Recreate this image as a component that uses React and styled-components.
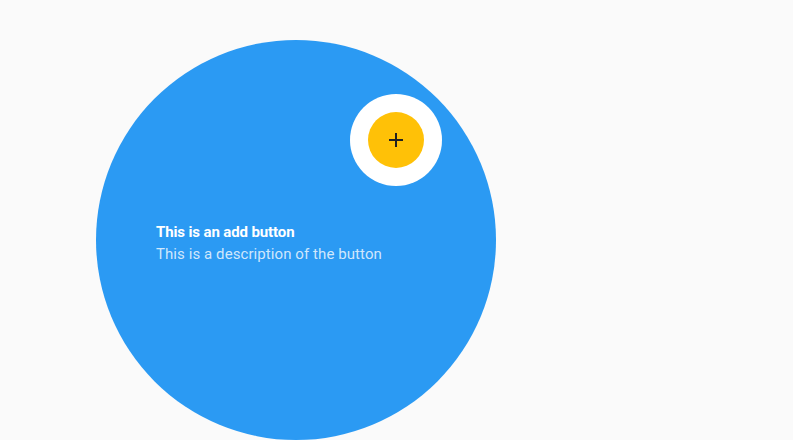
import React from 'react';
import styled, { createGlobalStyle } from 'styled-components';

const GlobalStyle = createGlobalStyle`
  html, body {
    margin: 0;
    padding: 0;
    background: #fafafa;
    font-family: Roboto, "Liberation Sans", sans-serif;
  }
`;

const Page = styled.div`
  position: relative;
  width: 793px;
  height: 440px;
  overflow: hidden;
  background: #fafafa;
`;

// feature discovery overlay
const Discovery = styled.div`
  position: absolute;
  left: 96px;
  top: 40px;
  width: 400px;
  height: 400px;
  border-radius: 50%;
  background: #2b9af3;
  box-sizing: border-box;
  padding: 182px 60px 0;
  display: flex;
  flex-direction: column;
`;

const Title = styled.div`
  font-size: 15px;
  font-weight: 700;
  letter-spacing: -0.12px;
  color: #ffffff;
  line-height: 20px;
`;

const Description = styled.div`
  font-size: 15px;
  font-weight: 400;
  letter-spacing: 0.08px;
  color: rgba(255, 255, 255, 0.78);
  line-height: 20px;
  margin-top: 2px;
`;

const TargetRing = styled.div`
  position: absolute;
  left: 254px;
  top: 54px;
  width: 92px;
  height: 92px;
  border-radius: 50%;
  background: #ffffff;
  display: flex;
  align-items: center;
  justify-content: center;
`;

const Fab = styled.button`
  width: 56px;
  height: 56px;
  border-radius: 50%;
  border: none;
  padding: 0;
  background: #ffc107;
  display: flex;
  align-items: center;
  justify-content: center;
  cursor: pointer;
`;

function PlusIcon() {
  return (
    <svg width="24" height="24" viewBox="0 0 24 24">
      <path d="M19 13h-6v6h-2v-6H5v-2h6V5h2v6h6v2z" fill="#212121" />
    </svg>
  );
}

export default function App() {
  return (
    <>
      <GlobalStyle />
      <Page>
        <Discovery>
          <Title>This is an add button</Title>
          <Description>This is a description of the button</Description>
          <TargetRing>
            <Fab>
              <PlusIcon />
            </Fab>
          </TargetRing>
        </Discovery>
      </Page>
    </>
  );
}
